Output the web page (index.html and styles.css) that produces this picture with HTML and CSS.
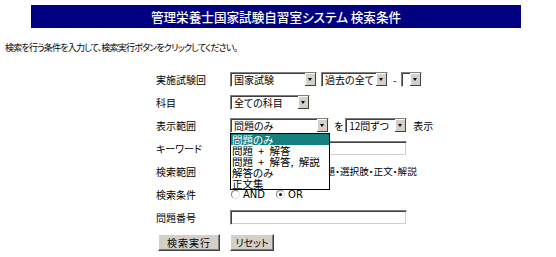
FILE: index.html
```html
<!DOCTYPE html>
<html lang="ja">
<head>
    <meta charset="UTF-8">
    <title>管理栄養士国家試験自習室システム 検索条件</title>
    <link rel="stylesheet" href="styles.css">
</head>
<body>
    <h1 class="title-bar">管理栄養士国家試験自習室システム 検索条件</h1>
    <p class="intro">検索を行う条件を入力して、検索実行ボタンをクリックしてください。</p>

    <form class="search">
        <div class="row">
            <span class="label">実施試験回</span>
            <div class="field">
                <div class="select sel-exam">国家試験<span class="arrow"></span></div>
                <div class="select sel-from">過去の全て<span class="arrow"></span></div>
                <span class="dash">-</span>
                <div class="select sel-to"><span class="arrow"></span></div>
            </div>
        </div>
        <div class="row">
            <span class="label">科目</span>
            <div class="field">
                <div class="select sel-subject">全ての科目<span class="arrow"></span></div>
            </div>
        </div>
        <div class="row">
            <span class="label">表示範囲</span>
            <div class="field">
                <div class="select sel-view">問題のみ<span class="arrow"></span>
                    <ul class="drop-list">
                        <li class="active">問題のみ</li>
                        <li>問題 + 解答</li>
                        <li>問題 + 解答, 解説</li>
                        <li>解答のみ</li>
                        <li>正文集</li>
                    </ul>
                </div>
                <span class="wo">を</span>
                <div class="select sel-count">12問ずつ<span class="arrow"></span></div>
                <span class="suffix">表示</span>
            </div>
        </div>
        <div class="row">
            <span class="label">キーワード</span>
            <div class="field">
                <div class="text-input"></div>
            </div>
        </div>
        <div class="row">
            <span class="label">検索範囲</span>
            <div class="field">
                <span class="range-text">問題・選択肢・正文・解説</span>
            </div>
        </div>
        <div class="row">
            <span class="label">検索条件</span>
            <div class="field radios">
                <span class="radio"></span><span class="radio-text">AND</span>
                <span class="radio checked"></span><span class="radio-text">OR</span>
            </div>
        </div>
        <div class="row">
            <span class="label">問題番号</span>
            <div class="field">
                <div class="text-input"></div>
            </div>
        </div>
        <div class="buttons">
            <button type="button" class="btn btn-search">検索実行</button>
            <button type="button" class="btn btn-reset">リセット</button>
        </div>
    </form>
</body>
</html>
```

FILE: styles.css
```css
body {
    margin: 0;
    background: #fff;
    color: #000;
    font-family: "Noto Sans CJK JP", sans-serif;
    font-size: 10px;
    font-feature-settings: "palt";
}

.title-bar {
    margin: 5px 35px 0 31px;
    height: 23px;
    background: #000080;
    color: #fff;
    font-size: 12.6px;
    font-weight: 500;
    display: flex;
    align-items: center;
    justify-content: center;
}

.intro {
    margin: 14px 0 0 5px;
    font-size: 9px;
    letter-spacing: -0.8px;
    line-height: 12px;
}

.search {
    margin: 14px 0 0 156px;
}

.row {
    display: flex;
    align-items: center;
    height: 23px;
}

.label {
    width: 74px;
    flex: none;
}

.field {
    display: flex;
    align-items: center;
}

/* fake windows-classic select boxes */
.select {
    position: relative;
    box-sizing: border-box;
    height: 15px;
    padding-left: 3px;
    line-height: 13px;
    background: #fff;
    border: 1px solid;
    border-color: #808080 #fff #fff #808080;
    box-shadow: inset 1px 1px #404040;
    font-size: 10px;
}

.arrow {
    position: absolute;
    right: 0;
    top: 0;
    width: 11px;
    height: 13px;
    background: #d4d0c8;
    box-shadow: inset -1px -1px #404040, inset 1px 1px #fff;
}

.arrow::after {
    content: "";
    position: absolute;
    left: 3px;
    top: 5px;
    border-left: 2.5px solid transparent;
    border-right: 2.5px solid transparent;
    border-top: 3px solid #000;
}

.sel-exam { width: 87px; }
.sel-from { width: 67px; margin-left: 4px; }
.sel-to { width: 21px; }
.sel-subject { width: 80px; }
.sel-view { width: 99px; }
.sel-count { width: 62px; }

.dash {
    margin: 0 5px 0 5px;
}

.wo {
    margin: 0 2px 0 5px;
}

.suffix {
    margin-left: 6px;
}

.drop-list {
    position: absolute;
    left: -1px;
    top: 14px;
    z-index: 2;
    width: 100px;
    box-sizing: border-box;
    margin: 0;
    padding: 0;
    list-style: none;
    background: #fff;
    border: 1px solid #000;
    font-size: 10.5px;
    word-spacing: 3px;
}

.drop-list li {
    height: 11px;
    line-height: 11px;
    padding-left: 1px;
    white-space: nowrap;
}

.drop-list li.active {
    background: #168080;
    color: #fff;
}

.text-input {
    box-sizing: border-box;
    width: 177px;
    height: 15px;
    background: #fff;
    border: 1px solid;
    border-color: #808080 #fff #fff #808080;
    box-shadow: inset 1px 1px #404040, inset -1px -1px #d4d0c8;
}

.range-text {
    margin: 0 0 2px 86px;
    font-size: 9.6px;
}

.radios {
    font-family: "DejaVu Sans", sans-serif;
    font-size: 10px;
}

.radio {
    position: relative;
    box-sizing: border-box;
    width: 9px;
    height: 9px;
    margin-left: 1px;
    border-radius: 50%;
    border: 1px solid;
    border-color: #808080 #e0e0e0 #e0e0e0 #808080;
    background: #fff;
}

.radio.checked::after {
    content: "";
    position: absolute;
    left: 2px;
    top: 2px;
    width: 3px;
    height: 3px;
    border-radius: 50%;
    background: #000;
}

.radio-text {
    margin: 0 10px 0 3px;
}

.buttons {
    display: flex;
    gap: 10px;
    margin: 5px 0 0 2px;
}

.btn {
    height: 17px;
    padding: 0;
    background: #d4d0c8;
    border: 1px solid;
    border-color: #fff #404040 #404040 #fff;
    box-shadow: inset -1px -1px #808080;
    font-family: "Noto Sans CJK JP", sans-serif;
    font-feature-settings: "palt";
    font-size: 10px;
    line-height: 13px;
    white-space: nowrap;
    color: #000;
}

.btn-search {
    width: 62px;
    letter-spacing: 1px;
}

.btn-reset {
    width: 44px;
}
```
